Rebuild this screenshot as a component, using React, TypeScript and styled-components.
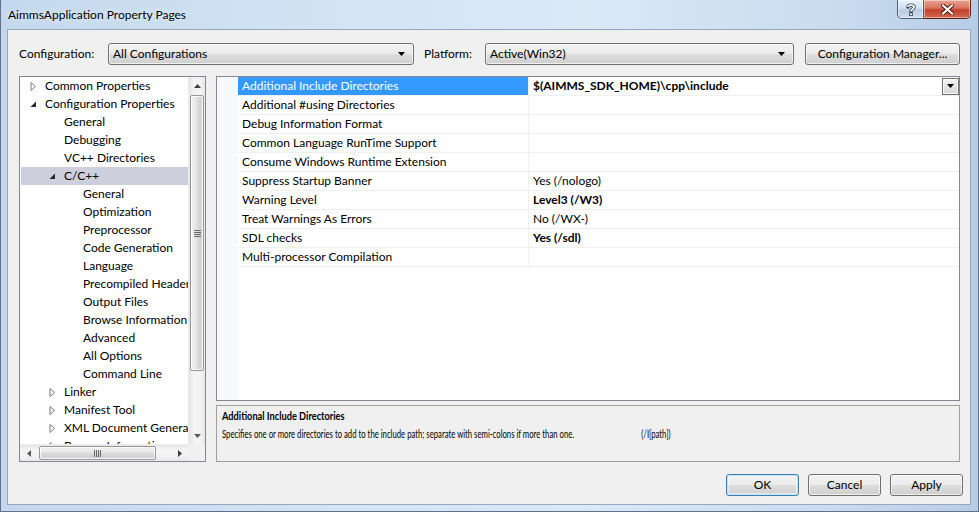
import React from 'react';
import styled, { createGlobalStyle } from 'styled-components';

const UI_FONT = `Lato, "Noto Sans", "DejaVu Sans", sans-serif`;

type Toggle = 'open' | 'closed';

type TreeNode = {
  label: string;
  level: number;
  toggle?: Toggle;
  selected?: boolean;
};

type Property = {
  name: string;
  value?: string;
  bold?: boolean;
  selected?: boolean;
};

const treeNodes: TreeNode[] = [
  { label: 'Common Properties', level: 0, toggle: 'closed' },
  { label: 'Configuration Properties', level: 0, toggle: 'open' },
  { label: 'General', level: 1 },
  { label: 'Debugging', level: 1 },
  { label: 'VC++ Directories', level: 1 },
  { label: 'C/C++', level: 1, toggle: 'open', selected: true },
  { label: 'General', level: 2 },
  { label: 'Optimization', level: 2 },
  { label: 'Preprocessor', level: 2 },
  { label: 'Code Generation', level: 2 },
  { label: 'Language', level: 2 },
  { label: 'Precompiled Headers', level: 2 },
  { label: 'Output Files', level: 2 },
  { label: 'Browse Information', level: 2 },
  { label: 'Advanced', level: 2 },
  { label: 'All Options', level: 2 },
  { label: 'Command Line', level: 2 },
  { label: 'Linker', level: 1, toggle: 'closed' },
  { label: 'Manifest Tool', level: 1, toggle: 'closed' },
  { label: 'XML Document Generator', level: 1, toggle: 'closed' },
  { label: 'Browse Information', level: 1, toggle: 'closed' },
];

const properties: Property[] = [
  { name: 'Additional Include Directories', value: '$(AIMMS_SDK_HOME)\\cpp\\include', bold: true, selected: true },
  { name: 'Additional #using Directories' },
  { name: 'Debug Information Format' },
  { name: 'Common Language RunTime Support' },
  { name: 'Consume Windows Runtime Extension' },
  { name: 'Suppress Startup Banner', value: 'Yes (/nologo)' },
  { name: 'Warning Level', value: 'Level3 (/W3)', bold: true },
  { name: 'Treat Warnings As Errors', value: 'No (/WX-)' },
  { name: 'SDL checks', value: 'Yes (/sdl)', bold: true },
  { name: 'Multi-processor Compilation' },
];

const GlobalStyle = createGlobalStyle`
  *, *::before, *::after { box-sizing: border-box; }
  html, body {
    margin: 0;
    padding: 0;
    background: #c8dcf0;
  }
  body {
    font-family: ${UI_FONT};
    font-size: 12px;
    color: #000;
  }
`;

/* ---------- window frame ---------- */

const Window = styled.div`
  width: 979px;
  height: 512px;
  display: flex;
  flex-direction: column;
  padding: 0 7px 6px 6px;
  border: 1px solid #61738c;
  border-top: none;
  background: linear-gradient(90deg, #c3d8ee 0%, #d4e4f5 35%, #dbe8f6 60%, #c9dcf0 85%, #b7cde6 100%);
`;

const TitleBar = styled.div`
  height: 29px;
  display: flex;
  align-items: flex-start;
  flex-shrink: 0;
`;

const TitleText = styled.div`
  padding: 7px 0 0 1px;
  line-height: 16px;
  font-size: 12px;
  color: #000;
  text-shadow: 0 0 6px rgba(255, 255, 255, 0.9);
`;

const CaptionButtons = styled.div`
  margin-left: auto;
  display: flex;
`;

const CaptionButton = styled.div<{ $variant: 'help' | 'close' }>`
  height: 19px;
  width: ${({ $variant }) => ($variant === 'close' ? 47 : 27)}px;
  display: flex;
  align-items: center;
  justify-content: center;
  border: 1px solid ${({ $variant }) => ($variant === 'close' ? '#5c1e14' : '#4f6178')};
  border-top: none;
  border-left-width: ${({ $variant }) => ($variant === 'close' ? 0 : 1)}px;
  border-radius: ${({ $variant }) => ($variant === 'close' ? '0 0 5px 0' : '0 0 0 5px')};
  background: ${({ $variant }) =>
    $variant === 'close'
      ? 'linear-gradient(180deg, #e8a493 0%, #d8735e 45%, #c2412a 55%, #d16a4f 100%)'
      : 'linear-gradient(180deg, #eaf1f9 0%, #d3e0ee 45%, #bccde1 55%, #cfdcec 100%)'};
  box-shadow: inset 0 0 0 1px rgba(255, 255, 255, 0.45);
`;

/* ---------- client area ---------- */

const Client = styled.div`
  flex: 1;
  display: flex;
  flex-direction: column;
  background: #f0f0f0;
  border: 1px solid #97a8bd;
  padding: 13px 10px 8px 11px;
`;

const TopRow = styled.div`
  height: 22px;
  display: flex;
  align-items: center;
  flex-shrink: 0;
`;

const FieldLabel = styled.div<{ $width: number; $gap?: number }>`
  width: ${({ $width }) => $width}px;
  margin-left: ${({ $gap }) => $gap ?? 0}px;
  line-height: 22px;
  white-space: nowrap;
`;

const buttonFace = `
  border: 1px solid #707070;
  border-radius: 3px;
  background: linear-gradient(180deg, #f2f2f2 0%, #ebebeb 48%, #dddddd 52%, #cfcfcf 100%);
  box-shadow: inset 0 0 0 1px rgba(255, 255, 255, 0.7);
`;

const ComboBox = styled.div<{ $width: number }>`
  ${buttonFace}
  width: ${({ $width }) => $width}px;
  height: 22px;
  display: flex;
  align-items: center;
  padding: 0 8px 0 4px;
  line-height: 20px;
`;

const ComboText = styled.span`
  flex: 1;
`;

const PushButton = styled.div<{ $width: number; $gap?: number; $default?: boolean }>`
  ${buttonFace}
  width: ${({ $width }) => $width}px;
  margin-left: ${({ $gap }) => $gap ?? 0}px;
  height: 22px;
  display: flex;
  align-items: center;
  justify-content: center;
  line-height: 20px;
  ${({ $default }) =>
    $default
      ? `border-color: #3c7fb1; box-shadow: inset 0 0 0 1px #bfe3f8, inset 0 0 0 2px rgba(255,255,255,0.5);`
      : ''}
`;

const Main = styled.div`
  margin-top: 11px;
  height: 386px;
  display: flex;
  gap: 10px;
  flex-shrink: 0;
`;

/* ---------- tree ---------- */

const TreePanel = styled.div`
  width: 187px;
  height: 100%;
  border: 1px solid #828790;
  background: #fff;
  display: grid;
  grid-template-columns: 1fr 17px;
  grid-template-rows: 1fr 17px;
  overflow: hidden;
`;

const TreeList = styled.div`
  overflow: hidden;
  padding-left: 1px;
`;

const TreeRow = styled.div<{ $level: number; $selected?: boolean }>`
  height: 18px;
  display: flex;
  align-items: center;
  padding-left: ${({ $level }) => 9 + $level * 19}px;
  white-space: nowrap;
  background: ${({ $selected }) => ($selected ? '#cdd0dc' : 'transparent')};
`;

const ToggleBox = styled.span`
  width: 15px;
  flex-shrink: 0;
  display: flex;
  align-items: center;
`;

const TreeLabel = styled.span`
  line-height: 18px;
`;

const ScrollTrack = styled.div<{ $dir: 'v' | 'h' }>`
  display: grid;
  ${({ $dir }) =>
    $dir === 'v'
      ? `grid-template-rows: 17px 1fr 17px;
         background: linear-gradient(90deg, #e5e5e5 0%, #f3f3f3 30%, #f3f3f3 70%, #e8e8e8 100%);
         border-left: 1px solid #ececec;`
      : `grid-template-columns: 17px 1fr 17px;
         background: linear-gradient(180deg, #e5e5e5 0%, #f3f3f3 30%, #f3f3f3 70%, #e8e8e8 100%);
         border-top: 1px solid #ececec;`}
  overflow: hidden;
`;

const ArrowCell = styled.div`
  display: flex;
  align-items: center;
  justify-content: center;
`;

const ThumbArea = styled.div<{ $dir: 'v' | 'h' }>`
  display: flex;
  flex-direction: ${({ $dir }) => ($dir === 'v' ? 'column' : 'row')};
  overflow: hidden;
`;

const Thumb = styled.div<{ $dir: 'v' | 'h'; $offset: number; $length: number }>`
  flex-shrink: 0;
  border: 1px solid #979797;
  border-radius: 2px;
  display: flex;
  align-items: center;
  justify-content: center;
  ${({ $dir, $offset, $length }) =>
    $dir === 'v'
      ? `margin: ${$offset}px 1px 0 1px; height: ${$length}px;
         background: linear-gradient(90deg, #f1f1f1 0%, #e6e6e6 45%, #d8d8d8 55%, #d2d2d2 100%);`
      : `margin: 1px 0 1px ${$offset}px; width: ${$length}px;
         background: linear-gradient(180deg, #f1f1f1 0%, #e6e6e6 45%, #d8d8d8 55%, #d2d2d2 100%);`}
  box-shadow: inset 0 0 0 1px rgba(255, 255, 255, 0.8);
`;

const Corner = styled.div`
  background: #f0f0f0;
`;

/* ---------- property grid ---------- */

const RightColumn = styled.div`
  flex: 1;
  display: flex;
  flex-direction: column;
  gap: 4px;
`;

const PropPanel = styled.div`
  height: 325px;
  border: 1px solid #828790;
  background: #fff;
  display: flex;
  flex-shrink: 0;
`;

const PropMargin = styled.div`
  width: 21px;
  background: #f7f9fc;
  flex-shrink: 0;
`;

const PropTable = styled.div`
  flex: 1;
  display: flex;
  flex-direction: column;
`;

const PropRow = styled.div`
  height: 19px;
  display: grid;
  grid-template-columns: 291px 1fr;
  border-bottom: 1px solid #f0f0f0;
`;

const NameCell = styled.div<{ $selected?: boolean }>`
  padding-left: 4px;
  line-height: 18px;
  white-space: nowrap;
  border-right: 1px solid #f0f0f0;
  background: ${({ $selected }) => ($selected ? '#3399ff' : 'transparent')};
  color: ${({ $selected }) => ($selected ? '#fff' : '#000')};
`;

const ValueCell = styled.div<{ $bold?: boolean }>`
  padding-left: 4px;
  display: flex;
  align-items: center;
  line-height: 18px;
  white-space: nowrap;
  font-weight: ${({ $bold }) => ($bold ? 700 : 400)};
`;

const ValueText = styled.span`
  flex: 1;
`;

const DropButton = styled.div`
  width: 17px;
  height: 17px;
  border: 1px solid #707070;
  background: linear-gradient(180deg, #f4f4f4 0%, #e4e4e4 50%, #d6d6d6 100%);
  box-shadow: inset 0 0 0 1px rgba(255, 255, 255, 0.8);
  display: flex;
  align-items: center;
  justify-content: center;
`;

const DescPanel = styled.div`
  flex: 1;
  border: 1px solid #a0a0a0;
  background: #f0f0f0;
  padding: 1px 0 0 5px;
  overflow: hidden;
`;

/* the dialog's description pane uses a condensed face */
const DescLine = styled.div<{ $bold?: boolean }>`
  height: 18px;
  line-height: 18px;
  white-space: nowrap;
  font-size: ${({ $bold }) => ($bold ? 12 : 11.5)}px;
  font-weight: ${({ $bold }) => ($bold ? 700 : 400)};
  transform: scaleX(${({ $bold }) => ($bold ? 0.77 : 0.672)});
  transform-origin: left center;
`;

const Switch = styled.span`
  margin-left: 100px;
`;

const ButtonRow = styled.div`
  margin-top: 12px;
  margin-right: -3px;
  height: 22px;
  display: flex;
  justify-content: flex-end;
  flex-shrink: 0;
`;

/* ---------- glyphs ---------- */

const TreeToggle = ({ state }: { state: Toggle }) =>
  state === 'closed' ? (
    <svg width="7" height="9" viewBox="0 0 7 9">
      <polygon points="1,0.5 5.5,4.5 1,8.5" fill="#fff" stroke="#7a7a7a" strokeWidth="1" />
    </svg>
  ) : (
    <svg width="7" height="7" viewBox="0 0 7 7">
      <polygon points="6,0.5 6,6 0.5,6" fill="#262626" />
    </svg>
  );

const Arrow = ({ dir, color = '#3c3c3c' }: { dir: 'up' | 'down' | 'left' | 'right'; color?: string }) => {
  const pts = {
    up: '0,4 3.5,0 7,4',
    down: '0,0 7,0 3.5,4',
    left: '4,0 4,7 0,3.5',
    right: '0,0 4,3.5 0,7',
  }[dir];
  const vertical = dir === 'up' || dir === 'down';
  return (
    <svg width={vertical ? 7 : 4} height={vertical ? 4 : 7} viewBox={vertical ? '0 0 7 4' : '0 0 4 7'}>
      <polygon points={pts} fill={color} />
    </svg>
  );
};

const Gripper = ({ dir }: { dir: 'v' | 'h' }) =>
  dir === 'v' ? (
    <svg width="7" height="7" viewBox="0 0 7 7">
      {[0.5, 2.5, 4.5, 6.5].map((y) => (
        <line key={y} x1="0" x2="7" y1={y} y2={y} stroke="#666" strokeWidth="1" />
      ))}
    </svg>
  ) : (
    <svg width="7" height="7" viewBox="0 0 7 7">
      {[0.5, 2.5, 4.5, 6.5].map((x) => (
        <line key={x} y1="0" y2="7" x1={x} x2={x} stroke="#666" strokeWidth="1" />
      ))}
    </svg>
  );

const HelpGlyph = () => (
  <svg width="10" height="13" viewBox="0 0 10 13">
    <path
      d="M2 4 C2 1.5 8 1.5 8 4 C8 6 5 6 5 8.5"
      fill="none"
      stroke="#2c3e55"
      strokeWidth="3.4"
      strokeLinecap="round"
    />
    <path d="M2 4 C2 1.5 8 1.5 8 4 C8 6 5 6 5 8.5" fill="none" stroke="#fff" strokeWidth="1.8" />
    <rect x="3.6" y="10" width="2.8" height="2.6" fill="#fff" stroke="#2c3e55" strokeWidth="0.8" />
  </svg>
);

const CloseGlyph = () => (
  <svg width="13" height="11" viewBox="0 0 13 11">
    <path d="M2 1.5 L11 9.5 M11 1.5 L2 9.5" stroke="#4a1208" strokeWidth="4" strokeLinecap="square" />
    <path d="M2 1.5 L11 9.5 M11 1.5 L2 9.5" stroke="#fff" strokeWidth="2.2" strokeLinecap="square" />
  </svg>
);

/* ---------- parts ---------- */

const Tree = () => (
  <TreePanel>
    <TreeList>
      {treeNodes.map((node, i) => (
        <TreeRow key={i} $level={node.level} $selected={node.selected}>
          <ToggleBox>{node.toggle && <TreeToggle state={node.toggle} />}</ToggleBox>
          <TreeLabel>{node.label}</TreeLabel>
        </TreeRow>
      ))}
    </TreeList>
    <ScrollTrack $dir="v">
      <ArrowCell>
        <Arrow dir="up" />
      </ArrowCell>
      <ThumbArea $dir="v">
        <Thumb $dir="v" $offset={1} $length={276}>
          <Gripper dir="v" />
        </Thumb>
      </ThumbArea>
      <ArrowCell>
        <Arrow dir="down" color="#5a5a5a" />
      </ArrowCell>
    </ScrollTrack>
    <ScrollTrack $dir="h">
      <ArrowCell>
        <Arrow dir="left" color="#5a5a5a" />
      </ArrowCell>
      <ThumbArea $dir="h">
        <Thumb $dir="h" $offset={2} $length={117}>
          <Gripper dir="h" />
        </Thumb>
      </ThumbArea>
      <ArrowCell>
        <Arrow dir="right" />
      </ArrowCell>
    </ScrollTrack>
    <Corner />
  </TreePanel>
);

const PropertyGrid = () => (
  <PropPanel>
    <PropMargin />
    <PropTable>
      {properties.map((p) => (
        <PropRow key={p.name}>
          <NameCell $selected={p.selected}>{p.name}</NameCell>
          <ValueCell $bold={p.bold}>
            <ValueText>{p.value}</ValueText>
            {p.selected && (
              <DropButton>
                <Arrow dir="down" color="#000" />
              </DropButton>
            )}
          </ValueCell>
        </PropRow>
      ))}
    </PropTable>
  </PropPanel>
);

export default function App() {
  return (
    <>
      <GlobalStyle />
      <Window>
        <TitleBar>
          <TitleText>AimmsApplication Property Pages</TitleText>
          <CaptionButtons>
            <CaptionButton $variant="help">
              <HelpGlyph />
            </CaptionButton>
            <CaptionButton $variant="close">
              <CloseGlyph />
            </CaptionButton>
          </CaptionButtons>
        </TitleBar>
        <Client>
          <TopRow>
            <FieldLabel $width={89}>Configuration:</FieldLabel>
            <ComboBox $width={306}>
              <ComboText>All Configurations</ComboText>
              <Arrow dir="down" color="#000" />
            </ComboBox>
            <FieldLabel $width={61} $gap={10}>
              Platform:
            </FieldLabel>
            <ComboBox $width={309}>
              <ComboText>Active(Win32)</ComboText>
              <Arrow dir="down" color="#000" />
            </ComboBox>
            <PushButton $width={155} $gap={11}>
              Configuration Manager...
            </PushButton>
          </TopRow>
          <Main>
            <Tree />
            <RightColumn>
              <PropertyGrid />
              <DescPanel>
                <DescLine $bold>Additional Include Directories</DescLine>
                <DescLine>
                  Specifies one or more directories to add to the include path; separate with semi-colons if more
                  than one.
                  <Switch>(/I[path])</Switch>
                </DescLine>
              </DescPanel>
            </RightColumn>
          </Main>
          <ButtonRow>
            <PushButton $width={73} $default>
              OK
            </PushButton>
            <PushButton $width={73} $gap={9}>
              Cancel
            </PushButton>
            <PushButton $width={73} $gap={9}>
              Apply
            </PushButton>
          </ButtonRow>
        </Client>
      </Window>
    </>
  );
}
